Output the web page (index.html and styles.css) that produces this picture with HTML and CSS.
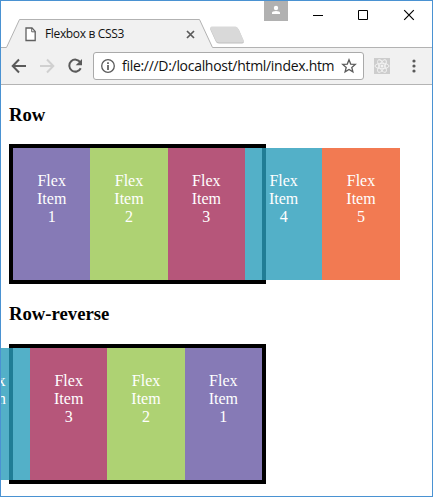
FILE: index.html
```html
<!DOCTYPE html>
<html lang="ru">
<head>
<meta charset="utf-8">
<title>Flexbox в CSS3</title>
<link rel="stylesheet" href="styles.css">
</head>
<body>
<div class="window">
  <header class="tabstrip">
    <svg class="tab-shape" width="431" height="47" viewBox="1 1 431 47">
      <path d="M0 47.5H7L19.5 19.5H199.5L212.5 47.5H433V49H0Z" fill="#f1f1f1"/>
      <path d="M0 47.5H6.500L19.500 19.500H199.500L212.500 47.500H433" fill="none" stroke="#b2b2b2"/>
      <path d="M212 27.500H235.500Q238 27.500 239 30L243.500 40.500Q244.500 43.500 242 43.500H219Q216.500 43.500 215.500 41L210.500 30Q209.500 27.500 212 27.500Z" fill="#bebebe"/>
      <path d="M212 26.500H235.500Q237.500 26.500 238.500 29L243.500 40Q244.500 42.500 242 42.500H219Q216.500 42.500 215.500 40L210.500 29Q209.500 26.500 212 26.500Z" fill="#d9d9d9"/>
    </svg>
    <div class="tab">
      <svg class="page-icon" width="12" height="15" viewBox="0 0 12 15"><path d="M1 1H7L10.200 4.400V13.500H1Z" fill="#fff" stroke="#606060" stroke-width="1.300"/><path d="M6.700 1V4.800H10.200" fill="none" stroke="#606060"/></svg>
      <span class="tab-title">Flexbox в CSS3</span>
      <svg class="tab-close" width="9" height="9" viewBox="0 0 9 9"><path d="M1 1L8 8M8 1L1 8" stroke="#5a5a5a" stroke-width="1.700"/></svg>
    </div>
    <div class="controls">
      <svg class="user" width="24" height="20" viewBox="0 0 24 20"><path d="M0 0H24V20H0Z" fill="#b1b1b1"/><circle cx="12" cy="7" r="2.200" fill="#fff"/><path d="M8 13V11.800Q8 10 12 10T16 11.800V13Z" fill="#fff"/></svg>
      <svg width="120" height="30" viewBox="312 1 120 30" fill="none" stroke="#000"><path d="M313 15.500H323"/><path d="M358.500 10.500H367.500V19.500H358.500Z"/><path d="M404.200 10.200L413.800 19.800M413.800 10.200L404.200 19.800" stroke-width="1.200"/></svg>
    </div>
  </header>
  <nav class="toolbar">
    <svg class="nav-icons" width="92" height="36" viewBox="1 48 92 36" fill="none" stroke-width="2">
      <path d="M26 66H13M19 59.500L12.700 66L19 72.500" stroke="#5a5a5a"/>
      <path d="M40 66H53M47 59.500L53.300 66L47 72.500" stroke="#d0d0d0"/>
      <path d="M80.300 62.300A6 6 0 1 0 80.700 68.200" stroke="#5a5a5a"/><path d="M82 59V65.300H75.700Z" fill="#5a5a5a"/>
    </svg>
    <div class="address">
      <svg class="info" width="16" height="16" viewBox="0 0 16 16"><circle cx="8" cy="8" r="6.300" fill="none" stroke="#5a5a5a" stroke-width="1.300"/><path d="M8 4.200V6M8 7V12" stroke="#5a5a5a" stroke-width="1.700"/></svg>
      <span class="url">file:///D:/localhost/html/index.htm</span>
      <svg class="star" width="16" height="16" viewBox="0 0 16 16"><path d="M8 1.800L9.700 6.100L14.300 6.400L10.800 9.400L11.900 13.900L8 11.500L4.100 13.900L5.200 9.400L1.700 6.400L6.300 6.100Z" fill="none" stroke="#5a5a5a" stroke-width="1.300"/></svg>
    </div>
    <svg class="react" width="16" height="16" viewBox="0 0 16 16"><path d="M0 0H16V16H0Z" fill="#cdcdcd"/><g fill="none" stroke="#f4f4f4" stroke-width=".9"><ellipse cx="8" cy="8" rx="7" ry="2.700"/><ellipse cx="8" cy="8" rx="7" ry="2.700" transform="rotate(60 8 8)"/><ellipse cx="8" cy="8" rx="7" ry="2.700" transform="rotate(120 8 8)"/></g><circle cx="8" cy="8" r="1.500" fill="#f4f4f4"/></svg>
    <svg class="menu" width="4" height="14" viewBox="0 0 4 14" fill="#5a5a5a"><circle cx="2" cy="2" r="1.600"/><circle cx="2" cy="7" r="1.600"/><circle cx="2" cy="12" r="1.600"/></svg>
  </nav>
  <main class="page">
    <h3 class="first">Row</h3>
    <div class="flex-container row">
      <div class="flex-item color1">Flex Item 1</div>
      <div class="flex-item color2">Flex Item 2</div>
      <div class="flex-item color3">Flex Item 3</div>
      <div class="flex-item color4">Flex Item 4</div>
      <div class="flex-item color5">Flex Item 5</div>
    </div>
    <h3>Row-reverse</h3>
    <div class="flex-container row-reverse">
      <div class="flex-item color1">Flex Item 1</div>
      <div class="flex-item color2">Flex Item 2</div>
      <div class="flex-item color3">Flex Item 3</div>
      <div class="flex-item color4">Flex Item 4</div>
    </div>
  </main>
</div>
</body>
</html>
```
FILE: styles.css
```css
* { box-sizing: border-box; }
body { margin: 0; overflow: hidden; }
svg { display: block; flex: none; }
.window {
  width: 433px;
  height: 497px;
  border: 1px solid #4a92d2;
  background: #fff;
  display: flex;
  flex-direction: column;
  overflow: hidden;
}
.tabstrip {
  height: 47px;
  flex: none;
  position: relative;
  display: flex;
  justify-content: space-between;
  align-items: flex-start;
}
.tab-shape { position: absolute; left: 0; top: 0; }
.tab {
  position: relative;
  display: flex;
  align-items: center;
  width: 194px;
  height: 28px;
  margin-top: 19px;
  padding-left: 24px;
}
.tab-title {
  width: 130px;
  margin-left: 8px;
  font: 12px/16px "Open Sans", sans-serif;
  letter-spacing: -0.35px;
  color: #111;
  flex: 1;
}
.controls { display: flex; position: relative; }
.user { margin-right: 24px; }
.toolbar {
  height: 37px;
  flex: none;
  display: flex;
  align-items: center;
  background: #f1f1f1;
  border-bottom: 1px solid #b4b4b4;
}
.address {
  width: 271px;
  height: 28px;
  flex: none;
  display: flex;
  align-items: center;
  padding: 0 6px;
  background: #fff;
  border: 1px solid #aaa;
  border-radius: 3px;
}
.url {
  width: 212px;
  margin-left: 6px;
  margin-right: 7px;
  white-space: nowrap;
  flex: none;
  font: 14px/20px "Open Sans", sans-serif;
  letter-spacing: -0.3px;
  color: #111;
}
.react { margin-left: 10px; }
.menu { margin-left: 22px; }
.page {
  flex: 1;
  padding: 0 8px;
  font: 16px/18px "Liberation Serif", serif;
  overflow: hidden;
}
h3 {
  margin: 19px 0;
  font-size: 18.72px;
  line-height: 22px;
  color: #000;
}
h3.first { margin-bottom: 18px; }
.flex-container {
  display: flex;
  width: 257px;
  height: 140px;
  border: 4px solid #000;
}
.row-reverse { flex-direction: row-reverse; }
.flex-item {
  flex: none;
  width: 77.34px;
  padding: 24px;
  text-align: center;
  color: #fff;
  opacity: .8;
}
.color1 { background: #6859a4; }
.color2 { background: #9bc851; }
.color3 { background: #a52c59; }
.color4 { background: #299dbb; }
.color5 { background: #ef5a27; }
```
